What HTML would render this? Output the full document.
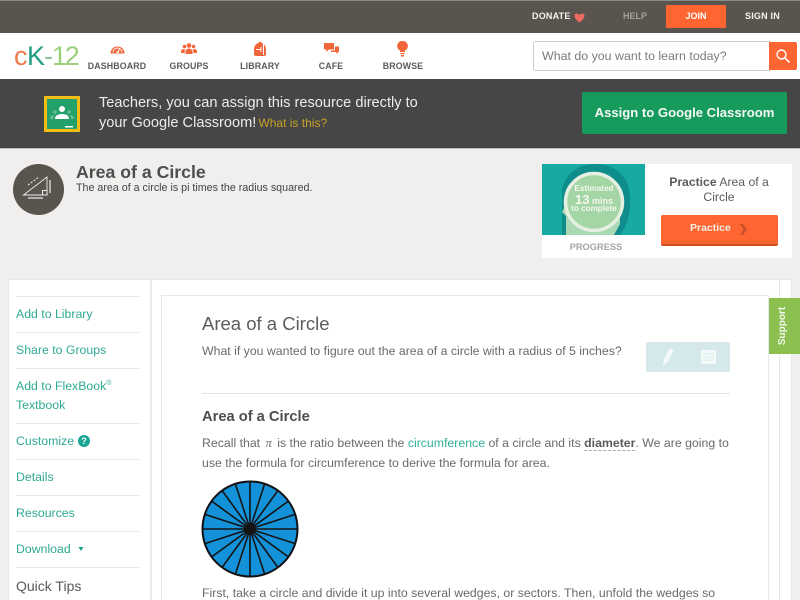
<!DOCTYPE html>
<html>
<head>
<meta charset="utf-8">
<style>
html,body{margin:0;padding:0;width:800px;height:600px;overflow:hidden;background:#f0efed;font-family:"Liberation Sans",sans-serif;}
.a{position:absolute;white-space:nowrap;}
.nav{font-size:8.800px;font-weight:bold;color:#5a5a58;text-align:center;width:80px;top:61px;letter-spacing:.15px;}
.side{left:16px;font-size:12.300px;color:#2fa994;}
.hr{position:absolute;left:16px;width:123px;height:1px;background:#e6e5e3;}
.t{font-size:12.300px;color:#6a6a68;}
</style>
</head>
<body>
<div class="a" style="left:0;top:0;width:800px;height:33px;background:#59554e;border-top:1px solid #8a8a86;box-sizing:border-box;"></div>
<div class="a" style="left:532px;top:11px;font-size:9px;font-weight:bold;color:#f2f2f0;letter-spacing:.2px;">DONATE</div>
<svg class="a" style="left:574px;top:12px;" width="11" height="11" viewBox="0 0 11 11"><path d="M5.500 10.500C2 7.500.5 6 .5 3.500.5 1.500 3.500.5 5.500 3c2-2.500 5-1.500 5 .5 0 2.500-1.500 4-5 7z" fill="#ee6a63"/></svg>
<div class="a" style="left:623px;top:11px;font-size:9px;font-weight:bold;color:#a3a19c;">HELP</div>
<div class="a" style="left:666px;top:5px;width:60px;height:23px;background:#ff6530;border-radius:1px;color:#fff;font-size:9px;font-weight:bold;text-align:center;line-height:23px;">JOIN</div>
<div class="a" style="left:745px;top:11px;font-size:9px;font-weight:bold;color:#f2f2f0;letter-spacing:.2px;">SIGN IN</div>

<div class="a" style="left:0;top:33px;width:800px;height:46px;background:#fff;"></div>
<div class="a" style="left:14px;top:41px;font-size:27px;line-height:30px;color:#ee7a4c;">c</div>
<div class="a" style="left:27px;top:41px;font-size:27px;line-height:30px;color:#1f9d82;">K</div>
<div class="a" style="left:44px;top:41px;font-size:27px;line-height:30px;color:#8fbf9a;">-</div>
<div class="a" style="left:52px;top:41px;font-size:27px;line-height:30px;letter-spacing:-2.300px;color:#9bd07a;">12</div>

<svg class="a" style="left:110px;top:42px;" width="15" height="12" viewBox="0 0 15 12"><path d="M.5 11.500A7 7 0 1 1 14.500 11.500z" fill="#f2663a"/><path d="M3 10.500A4.500 4.500 0 0 1 12 10.500" fill="none" stroke="#fff" stroke-width=".9"/><path d="M6 11L10 6 8.500 11z" fill="#fff"/></svg>
<div class="a nav" style="left:77px;">DASHBOARD</div>
<svg class="a" style="left:181px;top:43px;" width="16" height="11" viewBox="0 0 16 11" fill="#f2663a"><circle cx="8" cy="2.500" r="2.300"/><circle cx="3.500" cy="3.500" r="1.800"/><circle cx="12.500" cy="3.500" r="1.800"/><path d="M4.500 11V7.500Q8 3.500 11.500 7.500V11z"/><path d="M0 10V7.500Q2 5 4 6.500L3.500 10zM16 10V7.500Q14 5 12 6.500L12.500 10z"/></svg>
<div class="a nav" style="left:149px;">GROUPS</div>
<svg class="a" style="left:253px;top:41px;" width="14" height="16" viewBox="0 0 14 16"><path d="M5 2Q7-.5 9 2 13 4 13 8V13Q13 15 11 15H3Q1 15 1 13V8Q1 4 5 2z" fill="#f2663a"/><path d="M3 8.500H8M8 6V11M10.500 3V14" stroke="#fff" stroke-width="1" fill="none"/></svg>
<div class="a nav" style="left:220px;">LIBRARY</div>
<svg class="a" style="left:324px;top:43px;" width="15" height="13" viewBox="0 0 15 13" fill="#f2663a"><path d="M0 0H10V6.500H5L2.500 9V6.500H0z"/><path d="M11 3.500H15V9H13.500V11L11.500 9H7V7.500H11z"/></svg>
<div class="a nav" style="left:291px;">CAFE</div>
<svg class="a" style="left:397px;top:41px;" width="11" height="16" viewBox="0 0 11 16" fill="#f2663a"><path d="M5.500 0A5 5 0 0 1 8 9.500V11H3V9.500A5 5 0 0 1 5.500 0z"/><rect x="3.500" y="12" width="4" height="1.200"/><rect x="4" y="14" width="3" height="1.500"/></svg>
<div class="a nav" style="left:363px;">BROWSE</div>

<div class="a" style="left:533px;top:41px;width:237px;height:30px;background:#fff;border:1px solid #cfcdc6;border-right:0;border-radius:3px 0 0 3px;box-sizing:border-box;"></div>
<div class="a" style="left:542px;top:49px;font-size:12.400px;color:#7b7b7a;">What do you want to learn today?</div>
<div class="a" style="left:769px;top:42px;width:28px;height:28px;background:#ff6530;border-radius:0 2px 2px 0;"></div>
<svg class="a" style="left:775px;top:48px;" width="16" height="16" viewBox="0 0 16 16"><circle cx="6.500" cy="6.500" r="4.500" fill="none" stroke="#fff" stroke-width="1.400"/><path d="M10 10L14.500 14.500" stroke="#fff" stroke-width="1.600"/></svg>

<div class="a" style="left:0;top:79px;width:800px;height:69px;background:#464646;border-bottom:1px solid #bdbdbb;"></div>
<div class="a" style="left:44px;top:96px;width:36px;height:36px;background:#f5bd16;"></div>
<div class="a" style="left:47px;top:99px;width:30px;height:30px;background:#24a06a;"></div>
<svg class="a" style="left:47px;top:99px;" width="30" height="30" viewBox="0 0 30 30" fill="#fff"><circle cx="15" cy="10" r="3"/><path d="M8 20Q8 15 15 15T22 20z"/><circle cx="8" cy="13" r="1.800" opacity=".3"/><circle cx="22" cy="13" r="1.800" opacity=".3"/><path d="M3 20Q3 16 7 16L6 20zM27 20Q27 16 23 16L24 20z" opacity=".3"/><rect x="18" y="27" width="8" height="1.500"/></svg>
<div class="a" style="left:99px;top:93px;font-size:14.600px;line-height:20px;color:#ececea;">Teachers, you can assign this resource directly to<br>your Google Classroom! <span style="font-size:12px;color:#c9a227;margin-left:-2px;">What is this?</span></div>
<div class="a" style="left:582px;top:92px;width:205px;height:42px;background:#169b5d;border-radius:2px;color:#f4f8f5;font-size:13.100px;font-weight:bold;text-align:center;line-height:42px;">Assign to Google Classroom</div>

<div class="a" style="left:13px;top:164px;width:51px;height:51px;border-radius:50%;background:#59554e;"></div>
<svg class="a" style="left:13px;top:164px;" width="51" height="51" viewBox="0 0 51 51" fill="none" stroke="#f0efed"><path d="M10.500 31L34 13V31z" stroke-width=".9"/><rect x="29.500" y="26.500" width="4.500" height="4.500" stroke-width="1"/><path d="M15 34H30" stroke-width="1.200"/><path d="M37 16V29" stroke-width="1.200"/><path d="M15 21L26 13" stroke-width="1" stroke-dasharray="2 1.500"/></svg>
<div class="a" style="left:76px;top:162px;font-size:17.700px;font-weight:bold;color:#4e4e4c;">Area of a Circle</div>
<div class="a" style="left:76px;top:182px;font-size:10.700px;color:#444;">The area of a circle is pi times the radius squared.</div>

<div class="a" style="left:542px;top:164px;width:250px;height:94px;background:#fff;"></div>
<svg class="a" style="left:542px;top:164px;" width="103" height="71" viewBox="0 0 103 71"><rect width="103" height="71" fill="#16aaa2"/><path d="M20 71V25Q27 0 55 0 84 2 88 30 90 55 78 71z" fill="#0f8d8d"/><path d="M24 71V52L20 48 26 36 54 10 78 30V60L72 71z" fill="#a8d9b4"/><circle cx="52" cy="38" r="28.500" fill="#a4d5a5" stroke="#e5f0e2" stroke-width="3.500"/></svg>
<div class="a" style="left:564px;top:184px;width:60px;text-align:center;color:#f4f8f0;font-weight:bold;font-size:8.200px;line-height:10px;">Estimated</div>
<div class="a" style="left:564px;top:192px;width:60px;text-align:center;color:#f4f8f0;font-weight:bold;font-size:9px;line-height:15px;"><span style="font-size:13px;">13</span> mins</div>
<div class="a" style="left:564px;top:204px;width:60px;text-align:center;color:#f4f8f0;font-weight:bold;font-size:8.100px;line-height:10px;">to complete</div>
<div class="a" style="left:542px;top:242px;width:108px;text-align:center;font-size:9.300px;font-weight:bold;color:#a5a5a3;">PROGRESS</div>
<div class="a" style="left:660px;top:175px;width:118px;text-align:center;font-size:12.200px;line-height:14.500px;color:#5b5b59;white-space:normal;"><b>Practice</b> Area of a Circle</div>
<div class="a" style="left:661px;top:215px;width:117px;height:31px;background:#ff6530;border-bottom:2px solid #d24e20;border-radius:2px;box-sizing:border-box;"></div>
<div class="a" style="left:690px;top:222px;font-size:10.500px;font-weight:bold;color:#f8f0ea;">Practice</div>
<svg class="a" style="left:739px;top:224px;" width="9" height="11" viewBox="0 0 9 11"><path d="M1 0H4L8 5.500 4 11H1L4.500 5.500z" fill="#c9512a"/></svg>

<div class="a" style="left:8px;top:279px;width:784px;height:321px;background:#eae9e7;"></div>
<div class="a" style="left:9px;top:280px;width:141px;height:320px;background:#fff;"></div>
<div class="a" style="left:152px;top:280px;width:639px;height:320px;background:#fff;"></div>
<div class="a" style="left:779px;top:280px;width:1px;height:320px;background:#e9e8e6;"></div>
<div class="a" style="left:161px;top:295px;width:608px;height:305px;background:#fff;border:1px solid #e9e8e6;border-bottom:0;box-sizing:border-box;"></div>

<div class="hr" style="top:296px;"></div>
<div class="a side" style="top:307px;">Add to Library</div>
<div class="hr" style="top:332px;"></div>
<div class="a side" style="top:343px;">Share to Groups</div>
<div class="hr" style="top:368px;"></div>
<div class="a side" style="top:379px;">Add to FlexBook<sup style="font-size:7px;line-height:0;">®</sup></div>
<div class="a side" style="top:398px;">Textbook</div>
<div class="hr" style="top:423px;"></div>
<div class="a side" style="top:434px;">Customize</div>
<div class="a" style="left:78px;top:435px;width:12px;height:12px;border-radius:50%;background:#1aa595;color:#fff;font-size:9px;font-weight:bold;text-align:center;line-height:12px;">?</div>
<div class="hr" style="top:459px;"></div>
<div class="a side" style="top:470px;">Details</div>
<div class="hr" style="top:495px;"></div>
<div class="a side" style="top:506px;">Resources</div>
<div class="hr" style="top:531px;"></div>
<div class="a side" style="top:542px;">Download</div>
<svg class="a" style="left:78px;top:546px;" width="6" height="6" viewBox="0 0 6 6"><path d="M.5 1H5.500L3 5z" fill="#1f9c88"/></svg>
<div class="hr" style="top:567px;"></div>
<div class="a" style="left:16px;top:578px;font-size:14px;color:#5a5a58;">Quick Tips</div>

<div class="a" style="left:202px;top:313px;font-size:18.500px;color:#5c5c5a;">Area of a Circle</div>
<div class="a t" style="left:202px;top:344px;">What if you wanted to figure out the area of a circle with a radius of 5 inches?</div>
<div class="a" style="left:646px;top:342px;width:84px;height:30px;background:#d6e9ea;border-radius:2px;"></div>
<svg class="a" style="left:660px;top:347px;" width="60" height="20" viewBox="0 0 60 20"><path d="M3 19L4 12 10 1 14 3 8 14z" fill="#f4fafa"/><rect x="41" y="3" width="15" height="14" fill="#f4fafa"/><path d="M43 7H54M43 10H54M43 13H54" stroke="#d6e9ea" stroke-width="1"/></svg>
<div class="a" style="left:202px;top:393px;width:528px;height:1px;background:#e6e5e3;"></div>
<div class="a" style="left:202px;top:409px;font-size:14.700px;font-weight:bold;color:#4e4e4c;">Area of a Circle</div>
<div class="a t" style="left:202px;top:436px;">Recall that <i style="font-family:'Liberation Serif',serif;margin:0 -1px;">&nbsp;π&nbsp;</i> is the ratio between the <span style="color:#2fb09a;">circumference</span> of a circle and its <b style="border-bottom:1px dashed #aaa;color:#5a5a58;">diameter</b>. We are going to</div>
<div class="a t" style="left:202px;top:456px;">use the formula for circumference to derive the formula for area.</div>

<svg class="a" style="left:201px;top:480px;" width="98" height="98" viewBox="0 0 98 98">
<circle cx="49" cy="49" r="47.500" fill="#1391d9" stroke="#111" stroke-width="2"/>
<g stroke="#141414" stroke-width="1.600">
<path d="M49 2V96"/><path d="M2 49H96"/>
<path d="M63.500 4.300L34.500 93.700"/><path d="M34.500 4.300L63.500 93.700"/>
<path d="M76.600 11L21.400 87"/><path d="M21.400 11L76.600 87"/>
<path d="M87 21.400L11 76.600"/><path d="M11 21.400L87 76.600"/>
<path d="M93.700 34.500L4.300 63.500"/><path d="M4.300 34.500L93.700 63.500"/>
</g>
<circle cx="49" cy="49" r="6" fill="#141414"/>
</svg>
<div class="a t" style="left:202px;top:586px;">First, take a circle and divide it up into several wedges, or sectors. Then, unfold the wedges so</div>

<div class="a" style="left:769px;top:298px;width:31px;height:56px;background:#8cc152;"></div>
<div class="a" style="left:755px;top:319px;width:56px;height:14px;text-align:center;transform:rotate(-90deg);font-size:10px;line-height:14px;font-weight:bold;color:#f2f8ec;">Support</div>
</body>
</html>
